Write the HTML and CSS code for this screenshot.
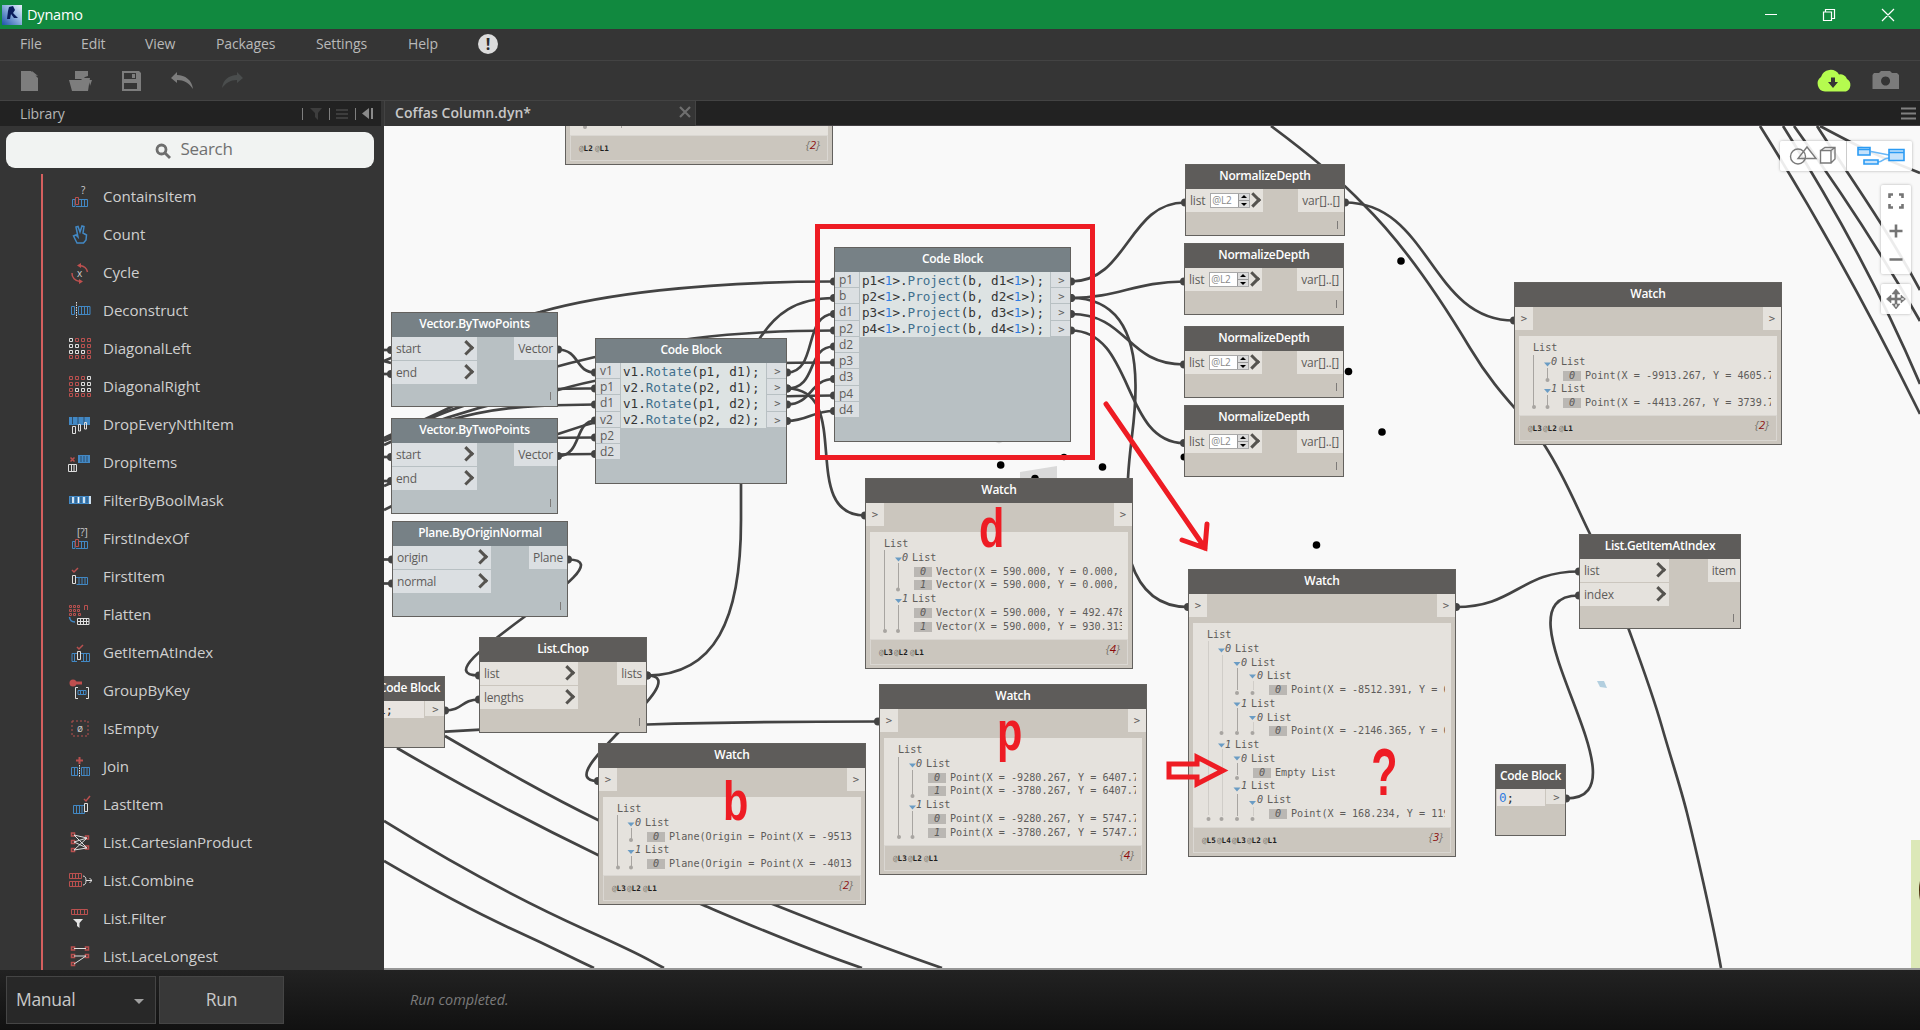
FILE: index.html
```html
<!DOCTYPE html>
<html lang="en">
<head>
  <meta charset="UTF-8">
  <title>Dynamo</title>
  <meta name="viewport" content="width=device-width, initial-scale=1.0" />
  <link rel="stylesheet" href="styles.css">
</head>
<body>
  <div class="app">
    <header class="titlebar">
      <svg class="logo" width="20" height="20" viewBox="0 0 20 20">
        <defs><linearGradient id="lg" x1="0" y1="1" x2="1" y2="0"><stop offset="0" stop-color="#1c52a8"/><stop offset=".55" stop-color="#8fb2e0"/><stop offset="1" stop-color="#e8f0fa"/></linearGradient></defs>
        <rect width="20" height="20" fill="url(#lg)"/>
        <path d="M7 2L11 1L13 5L11 8L16 13L12 13L9 9L8 14L5 14L6 6Z" fill="#0a1c5c"/>
      </svg>
      <span class="app-name">Dynamo</span>
      <svg class="window-buttons" width="130" height="14" viewBox="0 0 130 14" fill="none" stroke="#fff" stroke-width="1.2">
        <path d="M0 6.500H12M58.500 4V12.500H66.500V4ZM60.500 3.500V1.500H69.500V10.500H67M117 1L129 13M129 1L117 13"/>
      </svg>
    </header>

    <nav class="menu">
      <span class="m-file">File</span><span class="m-edit">Edit</span><span class="m-view">View</span><span class="m-packages">Packages</span><span class="m-settings">Settings</span><span class="m-help">Help</span>
      <b class="notice">!</b>
    </nav>

    <div class="toolbar">
      <svg class="tools" width="230" height="24" viewBox="20 69 230 24" fill="#7d7d7d">
        <path d="M21 71H31L38 78V91H21ZM32 71L38 76L33 75Z"/>
        <path d="M75 71H88V76L85 77L83 79H75ZM69 80H81L83 78H90L88 91H72ZM89 80H92L90 86Z"/>
        <path fill-rule="evenodd" d="M122 71H139L141 73V91H122ZM124 73V79H136V73ZM124 83V89H137V83ZM132 74H135V78H132Z"/>
        <path d="M171 78L177 72V75C185 75 192 80 193 89C189 83 184 80 177 80V83Z"/>
        <path class="off" d="M243 78L237 72V75C229 75 223 80 222 88C226 83 230 80 237 80V83Z"/>
      </svg>
      <svg class="cloud" width="90" height="26" viewBox="1814 69 90 26">
        <path d="M1824 92.500A8 8 0 0 1 1820 78A10 10 0 0 1 1838 75.500A7 7 0 0 1 1846 80A7 7 0 0 1 1845 92.500Z" fill="#b5fb4f"/>
        <path d="M1830 78.500H1834V83H1837L1832 89L1827 83H1830Z" fill="#353535"/>
        <path fill-rule="evenodd" d="M1873 74H1878L1880 72H1889L1891 74H1896L1898 76V90H1871.500V76ZM1884.500 77.500A4.500 4.500 0 1 0 1884.600 77.500Z" fill="#7b7b7b"/>
      </svg>
    </div>

    <div class="main">
      <aside class="library">
        <div class="library-head">
          <span>Library</span>
          <svg width="74" height="14" viewBox="301 106 74 14">
            <path d="M302.500 107V119M329.500 107V119M355.500 107V119" stroke="#7f7f7f"/>
            <path d="M310 107H322L318 112V119L315 116V112Z" fill="#3d3d3d"/>
            <path d="M336 109H348M336 113H348M336 117H348" stroke="#3d3d3d" stroke-width="2"/>
            <path d="M369 107V118L362 112.500ZM371 107H373V118H371Z" fill="#8a8a8a"/>
          </svg>
        </div>
        <div class="search">
          <svg width="16" height="16" viewBox="0 0 16 16" fill="none" stroke="#6e6e6e" stroke-width="2.800"><circle cx="6.500" cy="6.500" r="4.500"/><path d="M10 10L15 15"/></svg>
          <span>Search</span>
        </div>
        <ul class="items">
          <li><svg viewBox="0 0 24 24"><path class="b" d="M4.500 15.500H7V22.500H4.500ZM11 15.500H19.500V22.500H11M8 22.500H11M13.500 15.500V22.500M16.500 15.500V22.500"/><path class="r" d="M7.500 13.500H10.500V20.500H7.500Z"/><text x="13" y="10">?</text></svg>ContainsItem</li>
          <li><svg viewBox="0 0 24 24"><path class="b" stroke-width="1.500" d="M9 21L5.500 14L8 13L10 15L8 5L10 4.500L12 10L14 4L16 4.500L15 11L18.500 13L18 18L15.500 21Z"/></svg>Count</li>
          <li><svg viewBox="0 0 24 24"><path class="r" stroke-width="1.500" d="M12 5.500A9 8 0 0 1 19.500 12M12 21.500A9 8 0 0 1 4 13"/><path class="rf" d="M9 5.500L13 3V8ZM15 21.500L11 19V24Z"/><text x="9" y="17">x</text></svg>Cycle</li>
          <li><svg viewBox="0 0 24 24"><path class="b" d="M3.500 8.500H6.500V16.500H3.500ZM10.500 8.500H22V16.500H10.500ZM13.500 8.500V16.500M16.500 8.500V16.500M19.500 8.500V16.500"/><path class="w" stroke-dasharray="1.500 1" d="M8.500 4V20"/></svg>Deconstruct</li>
          <li><svg viewBox="0 0 24 24"><path class="r" d="M7.500 2.500h3v3h-3zM13.500 2.500h3v3h-3zM19.500 2.500h3v3h-3zM13.500 8.500h3v3h-3zM19.500 8.500h3v3h-3zM19.500 14.500h3v3h-3zM1.500 19.500h3v3h-3zM7.500 19.500h3v3h-3zM13.500 19.500h3v3h-3zM19.500 19.500h3v3h-3z"/><path class="w" d="M1.500 2.500h3v3h-3zM1.500 8.500h3v3h-3zM7.500 8.500h3v3h-3zM1.500 14.500h3v3h-3zM7.500 14.500h3v3h-3zM13.500 14.500h3v3h-3z"/></svg>DiagonalLeft</li>
          <li><svg viewBox="0 0 24 24"><path class="r" d="M1.500 2.500h3v3h-3zM7.500 2.500h3v3h-3zM13.500 2.500h3v3h-3zM1.500 8.500h3v3h-3zM7.500 8.500h3v3h-3zM1.500 14.500h3v3h-3zM1.500 19.500h3v3h-3zM7.500 19.500h3v3h-3zM13.500 19.500h3v3h-3zM19.500 19.500h3v3h-3z"/><path class="w" d="M19.500 2.500h3v3h-3zM13.500 8.500h3v3h-3zM19.500 8.500h3v3h-3zM7.500 14.500h3v3h-3zM13.500 14.500h3v3h-3zM19.500 14.500h3v3h-3z"/></svg>DiagonalRight</li>
          <li><svg viewBox="0 0 24 24"><path class="bf" d="M1 5H22V13H1Z"/><path d="M4.500 5V12M10 5V12M16 5V12" stroke="#2c4a68"/><path class="w" d="M4.500 14.500h3v7h-3zM10.500 12.500h2v6.500h-2zM16.500 10.500h2v6.500h-2z"/></svg>DropEveryNthItem</li>
          <li><svg viewBox="0 0 24 24"><path class="bf" d="M10 5H22V13H10Z"/><path d="M13 6V12M16 6V12M19 6V12" stroke="#2c4a68"/><path class="r" stroke-width="1.500" d="M2.500 7.500L6.500 11.500M6.500 7.500L2.500 11.500"/><path class="w" d="M.500 14.500H8.500V21.500H.500ZM3.500 15V21M6 15V21"/></svg>DropItems</li>
          <li><svg viewBox="0 0 24 24"><path class="bf" d="M1 8H23V16H1Z"/><path d="M5 9V15M10.500 9V15M16 9V15" stroke="#fff" stroke-width="1.500"/><path d="M3 9V15M8 9V15M13 9V15M19 9V15" stroke="#2c4a68"/><path d="M22 8V16" stroke="#fff" stroke-width="1.500"/></svg>FilterByBoolMask</li>
          <li><svg viewBox="0 0 24 24"><path class="b" d="M4.500 15.500H7V22.500H4.500ZM11 15.500H19.500V22.500H11M8 22.500H11M13.500 15.500V22.500M16.500 15.500V22.500"/><path class="r" d="M7.500 13.500H10.500V20.500H7.500Z"/><text x="9" y="10">[?]</text></svg>FirstIndexOf</li>
          <li><svg viewBox="0 0 24 24"><path class="b" d="M8 13.500H19.500V20.500H8.500M11 13.500V20.500M14 13.500V20.500M17 13.500V20.500"/><path class="w" d="M4.500 11.500H7.500V19.500H4.500Z"/><path class="r" stroke-width="1.500" d="M4 6L6 8L10 4"/></svg>FirstItem</li>
          <li><svg viewBox="0 0 24 24"><path class="r" d="M1.500 3.500h2v2h-2zM5.500 3.500h2v2h-2zM9.500 3.500h2v2h-2zM1.500 7.500h2v2h-2zM5.500 7.500h2v2h-2zM9.500 7.500h2v2h-2zM1.500 11.500h2v2h-2zM5.500 11.500h2v2h-2zM10.500 11.500h2v2h-2zM16.500 8V3.500H19.500V8"/><path class="b" stroke-width="1.500" d="M1.500 15Q2 20 7 20"/><path class="w" d="M9.500 16.500H21V22.500H9.500ZM12.500 17V22M15.500 17V22M18.500 17V22M9.500 19.500H21"/></svg>Flatten</li>
          <li><svg viewBox="0 0 24 24"><path class="b" d="M9 13.500H4V21.500H9M6.500 13.500V21.500M13 13.500H21.500V21.500H13M15.500 13.500V21.500M18.500 13.500V21.500"/><path class="w" d="M9.500 11.500H12.500V19.500H9.500Z"/><path class="r" stroke-width="1.500" d="M9 7L11 9L15 5"/></svg>GetItemAtIndex</li>
          <li><svg viewBox="0 0 24 24"><circle class="rf" cx="5" cy="5" r="3.500"/><path class="rf" d="M6 3.500H14V6.500H6Z"/><path class="w" d="M10 9.500H7.500V20.500H10M18 9.500H20.500V20.500H18"/><path class="b" d="M10 12.500H18V16.500H10ZM12.500 12.500V16.500M15.500 12.500V16.500"/></svg>GroupByKey</li>
          <li><svg viewBox="0 0 24 24"><path class="r" stroke-dasharray="2 2" d="M4 5H20V20H4Z"/><text x="9" y="16">ø</text></svg>IsEmpty</li>
          <li><svg viewBox="0 0 24 24"><path class="b" d="M3.500 13.500H9.500V21.500H3.500ZM6.500 13.500V21.500M13.500 13.500H21.500V21.500H13.500ZM16 13.500V21.500M19 13.500V21.500"/><path class="w" stroke-dasharray="1.500 1" d="M11.500 11V23"/><path class="r" stroke-width="2" d="M11.500 3V10M8 6.500H15"/></svg>Join</li>
          <li><svg viewBox="0 0 24 24"><path class="b" d="M5.500 13.500H16.500V21.500H5.500ZM8.500 13.500V21.500M11.500 13.500V21.500M14 13.500V21.500"/><path class="w" d="M16.500 11.500H19.500V19.500H16.500Z"/><path class="r" stroke-width="1.500" d="M16 7L18 9L22 4"/></svg>LastItem</li>
          <li><svg viewBox="0 0 24 24"><path class="r" stroke-width="1.500" d="M3.500 3h3v3h-3zM3.500 10.500h3v3h-3zM3.500 18.500h3v3h-3zM17.500 6h3v3h-3zM17.500 16h3v3h-3z"/><path class="w" d="M6 5L19 8M6 5L19 18M6 12L19 8M6 12L19 18M6 20L19 8M6 20L19 18"/></svg>List.CartesianProduct</li>
          <li><svg viewBox="0 0 24 24"><path class="r" d="M1.500 5.500H13.500V10.500H1.500ZM4.500 5.500V10.500M7.500 5.500V10.500M10.500 5.500V10.500M1.500 13.500H13.500V18.500H1.500ZM4.500 13.500V18.500M7.500 13.500V18.500M10.500 13.500V18.500"/><path class="w" d="M15 8Q18 8 18 12.500Q18 17 15 17M18 12.500H24M21.500 10L24 12.500L21.500 15"/></svg>List.Combine</li>
          <li><svg viewBox="0 0 24 24"><path class="r" d="M3.500 3.500H19.500V8.500H3.500ZM6.500 3.500V8.500M9.500 3.500V8.500M12.500 3.500V8.500M16.500 3.500V8.500"/><path fill="#e4e4e4" d="M5 13H15L11.500 17V22L9 20V17Z"/></svg>List.Filter</li>
          <li><svg viewBox="0 0 24 24"><path class="r" stroke-width="1.500" d="M3.500 3h3v3h-3zM17.500 3h3v3h-3zM3.500 10.500h3v3h-3zM17.500 10.500h3v3h-3zM3.500 18.500h3v3h-3z"/><path class="w" d="M6 4.500H18M6 12H18L6 20"/></svg>List.LaceLongest</li>
        </ul>
      </aside>

      <section class="workspace">
        <div class="tabs">
          <div class="tab"><span>Coffas Column.dyn*</span><svg width="12" height="12" viewBox="0 0 12 12" stroke="#6f6f6f" stroke-width="2.200"><path d="M1 1L11 11M11 1L1 11"/></svg></div>
          <svg class="burger" width="16" height="13" viewBox="0 0 16 13" stroke="#808080" stroke-width="2"><path d="M0 1.500H15M0 6.500H15M0 11.500H15"/></svg>
        </div>

        <div class="canvas">
          <div class="graph">
            <!-- geometry preview and connectors -->
            <svg class="wires" width="1920" height="1030" viewBox="0 0 1920 1030">
              <defs><marker id="dot" markerUnits="userSpaceOnUse" markerWidth="10" markerHeight="10" refX="5" refY="5"><circle cx="5" cy="5" r="4" fill="#434343"/></marker></defs>
              <path class="plane" d="M1020 472L1057 466V480H1020ZM993 441H1005L999 443.500Z"/>
              <g class="points">
                <circle cx="1401" cy="261" r="3.800"/><circle cx="1348.500" cy="371.500" r="3.800"/><circle cx="1382" cy="432" r="3.800"/><circle cx="1316.500" cy="545" r="3.800"/>
                <circle cx="1000.700" cy="465" r="3.800"/><circle cx="1064" cy="457" r="3.300"/><circle cx="1102.500" cy="467" r="3.800"/><circle cx="1035" cy="478.500" r="3.800"/><circle cx="1184" cy="457" r="3.500"/>
              </g>
              <path d="M1597 681L1604 681L1607 688L1600 687Z" fill="#b3cfdf"/>
              <path d="M1911 840H1920V968H1911Z" fill="#dce8b8"/>
              <path d="M1920 881Q1918 890 1920 900Z" fill="#4a2a08"/>

              <!-- long wires -->
              <path d="M1271 126C1310 155 1340 180 1363 204C1400 240 1440 298 1470 348S1525 415 1545 446S1577 508 1590 534S1618 600 1629 630S1652 692 1662 727S1680 785 1687 813S1712 918 1721 968"/>
              <path d="M1760 126Q1843 258 1920 414M1783 126C1830 200 1880 290 1920 384M1794 126C1830 176 1880 250 1920 321M1817 126C1845 170 1885 225 1920 290M1820 126C1850 142 1880 158 1920 173"/>
              <path d="M445 736C500 768 545 794 598 820C660 852 715 881 775 905S890 950 942 968"/>
              <path d="M397 748C465 788 530 822 598 855C640 876 670 891 703 905S800 947 862 968"/>
              <path d="M384 821C450 862 515 898 586 930S640 956 664 968"/>
              <path d="M384 861C425 885 470 910 514 930S570 957 594 968"/>
              <path marker-end="url(#dot)" d="M384 735C450 731 560 725 647 724.500C730 722 800 721.500 878 721.500"/>

              <!-- into the code blocks -->
              <path marker-end="url(#dot)" d="M384 361C420 345 470 330 540 312C600 295 700 281.500 834 281.500"/>
              <path marker-end="url(#dot)" d="M384 438C420 421 435 415 451 407C480 390 530 372 595 357C650 343 720 330.500 834 330.500"/>
              <path marker-end="url(#dot)" d="M384 441C440 418 500 400 558 390C620 372 700 362.500 834 362.500"/>
              <path marker-end="url(#dot)" d="M384 486C430 465 500 450 558 434C620 412 700 395.500 834 395.500"/>
              <path marker-end="url(#dot)" d="M384 440C440 412 470 402 510 393C545 388 570 388.500 595 388.500"/>
              <path marker-end="url(#dot)" d="M384 445C430 423 480 408 540 406C560 405 575 404.500 595 404.500"/>
              <path marker-end="url(#dot)" d="M540 438C560 437.500 575 437.500 595 437.500"/>
              <path marker-end="url(#dot)" d="M550 455C565 454 580 454 595 454"/>
              <path d="M384 510L392 506M384 361L391 363"/>
              <path marker-end="url(#dot)" d="M384 350H391"/>
              <path marker-end="url(#dot)" d="M384 374H391"/>
              <path marker-end="url(#dot)" d="M384 457H391"/>
              <path marker-end="url(#dot)" d="M384 481H391"/>
              <path marker-end="url(#dot)" d="M384 559.500H392"/>
              <path marker-end="url(#dot)" d="M384 583.500H392"/>
              <g class="links">
                <path d="M558 349.500C580 350 575 372.500 595 372.500"/>
                <path d="M558 456C582 456 574 421 595 420.500"/>
                <path d="M787 372.500C818 372.500 803 314 834 314"/>
                <path d="M787 388.500C818 388.500 806 346.500 834 346.500"/>
                <path d="M787 388.500C855 388.500 797 515.500 865 515.500"/>
                <path d="M787 404.500C812 404.500 810 379 834 379"/>
                <path d="M787 421C808 421 812 411 834 411"/>
                <path d="M1071 281.500C1128 281.500 1128 202.500 1185 202.500"/>
                <path d="M1071 298C1118 298 1136 281.500 1184 281.500"/>
                <path d="M1071 314C1128 314 1126 364.500 1184 364.500"/>
                <path d="M1071 330.500C1134 330.500 1122 443 1184 443"/>
                <path d="M1071 298C1112 298 1135 325 1135.500 385C1136 420 1130 440 1128 478C1118 530 1126 607 1188 607"/>
                <path d="M1345 202.500C1430 202.500 1430 320.500 1514 320.500"/>
                <path d="M1456 607C1515 607 1520 571.500 1579 571.500"/>
                <path d="M1566 798.500C1655 798.500 1487 595.500 1579 595.500"/>
                <path d="M568 559.500C636 559.500 411 675.500 479 675.500"/>
                <path d="M647 675.500C701 675.500 544 781 598 781"/>
                <path d="M445 710.500C463 710.500 461 699.500 479 699.500"/>
                <path d="M647 675.500C715 675 741 620 741 520V484C741 420 735 370 760 338C775 315 795 298 834 298"/>
              </g>
            </svg>

            <div class="node blue n-vector1">
              <div class="head">Vector.ByTwoPoints</div>
              <div class="ports"><div class="ins"><span>start</span><span>end</span></div><div class="outs"><span>Vector</span></div></div>
              <i class="lacing"></i>
            </div>
            <div class="node blue n-vector2">
              <div class="head">Vector.ByTwoPoints</div>
              <div class="ports"><div class="ins"><span>start</span><span>end</span></div><div class="outs"><span>Vector</span></div></div>
              <i class="lacing"></i>
            </div>
            <div class="node blue n-plane">
              <div class="head">Plane.ByOriginNormal</div>
              <div class="ports"><div class="ins"><span>origin</span><span>normal</span></div><div class="outs"><span>Plane</span></div></div>
              <i class="lacing"></i>
            </div>
            <div class="node n-chop">
              <div class="head">List.Chop</div>
              <div class="ports"><div class="ins"><span>list</span><span>lengths</span></div><div class="outs"><span>lists</span></div></div>
              <i class="lacing"></i>
            </div>
            <div class="node n-getitem">
              <div class="head">List.GetItemAtIndex</div>
              <div class="ports"><div class="ins"><span>list</span><span>index</span></div><div class="outs"><span>item</span></div></div>
              <i class="lacing"></i>
            </div>

            <div class="node depth n-depth1">
              <div class="head">NormalizeDepth</div>
              <div class="ports"><div class="ins"><span>list<em class="spin">@L2<b></b></em></span></div><div class="outs"><span>var[]..[]</span></div></div>
              <i class="lacing"></i>
            </div>
            <div class="node depth n-depth2">
              <div class="head">NormalizeDepth</div>
              <div class="ports"><div class="ins"><span>list<em class="spin">@L2<b></b></em></span></div><div class="outs"><span>var[]..[]</span></div></div>
              <i class="lacing"></i>
            </div>
            <div class="node depth n-depth3">
              <div class="head">NormalizeDepth</div>
              <div class="ports"><div class="ins"><span>list<em class="spin">@L2<b></b></em></span></div><div class="outs"><span>var[]..[]</span></div></div>
              <i class="lacing"></i>
            </div>
            <div class="node depth n-depth4">
              <div class="head">NormalizeDepth</div>
              <div class="ports"><div class="ins"><span>list<em class="spin">@L2<b></b></em></span></div><div class="outs"><span>var[]..[]</span></div></div>
              <i class="lacing"></i>
            </div>

            <div class="node blue n-rotate">
              <div class="head">Code Block</div>
              <div class="code-body">
                <div class="code-in"><span>v1</span><span>p1</span><span>d1</span><span>v2</span><span>p2</span><span>d2</span></div>
                <pre class="code">v1.<i>Rotate</i>(p1, d1);
v2.<i>Rotate</i>(p2, d1);
v1.<i>Rotate</i>(p1, d2);
v2.<i>Rotate</i>(p2, d2);</pre>
                <div class="code-out"><span>&gt;</span><span>&gt;</span><span>&gt;</span><span>&gt;</span></div>
              </div>
            </div>
            <div class="node blue n-project">
              <div class="head">Code Block</div>
              <div class="code-body">
                <div class="code-in"><span>p1</span><span>b</span><span>d1</span><span>p2</span><span>d2</span><span>p3</span><span>d3</span><span>p4</span><span>d4</span></div>
                <pre class="code">p1&lt;<b>1</b>&gt;.<i>Project</i>(b, d1&lt;<b>1</b>&gt;);
p2&lt;<b>1</b>&gt;.<i>Project</i>(b, d2&lt;<b>1</b>&gt;);
p3&lt;<b>1</b>&gt;.<i>Project</i>(b, d3&lt;<b>1</b>&gt;);
p4&lt;<b>1</b>&gt;.<i>Project</i>(b, d4&lt;<b>1</b>&gt;);</pre>
                <div class="code-out"><span>&gt;</span><span>&gt;</span><span>&gt;</span><span>&gt;</span></div>
              </div>
            </div>
            <div class="node n-one">
              <div class="head">Code Block</div>
              <div class="code-body"><pre class="code">1;</pre><div class="code-out"><span>&gt;</span></div></div>
            </div>
            <div class="node n-zero">
              <div class="head">Code Block</div>
              <div class="code-body"><pre class="code"><b>0</b>;</pre><div class="code-out"><span>&gt;</span></div></div>
            </div>

            <div class="node watch n-watch-top">
              <div class="tree"></div>
              <div class="foot"><span>@<b>L2</b></span><span>@<b>L1</b></span><em>{<b>2</b>}</em></div>
            </div>
            <div class="node watch n-watch-right">
              <div class="head">Watch</div>
              <div class="io"><span>&gt;</span><span>&gt;</span></div>
              <div class="tree">
                <div class="row">List</div>
                <div class="row d1"><i>0</i>List</div>
                <div class="row d2 leaf"><i>0</i>Point(X = -9913.267, Y = 4605.764</div>
                <div class="row d1"><i>1</i>List</div>
                <div class="row d2 leaf"><i>0</i>Point(X = -4413.267, Y = 3739.739</div>
              </div>
              <div class="foot"><span>@<b>L3</b></span><span>@<b>L2</b></span><span>@<b>L1</b></span><em>{<b>2</b>}</em></div>
            </div>
            <div class="node watch n-watch-d">
              <div class="head">Watch</div>
              <div class="io"><span>&gt;</span><span>&gt;</span></div>
              <div class="tree">
                <div class="row">List</div>
                <div class="row d1"><i>0</i>List</div>
                <div class="row d2 leaf"><i>0</i>Vector(X = 590.000, Y = 0.000,</div>
                <div class="row d2 leaf"><i>1</i>Vector(X = 590.000, Y = 0.000,</div>
                <div class="row d1"><i>1</i>List</div>
                <div class="row d2 leaf"><i>0</i>Vector(X = 590.000, Y = 492.478</div>
                <div class="row d2 leaf"><i>1</i>Vector(X = 590.000, Y = 930.313</div>
              </div>
              <div class="foot"><span>@<b>L3</b></span><span>@<b>L2</b></span><span>@<b>L1</b></span><em>{<b>4</b>}</em></div>
            </div>
            <div class="node watch n-watch-p">
              <div class="head">Watch</div>
              <div class="io"><span>&gt;</span><span>&gt;</span></div>
              <div class="tree">
                <div class="row">List</div>
                <div class="row d1"><i>0</i>List</div>
                <div class="row d2 leaf"><i>0</i>Point(X = -9280.267, Y = 6407.764</div>
                <div class="row d2 leaf"><i>1</i>Point(X = -3780.267, Y = 6407.764</div>
                <div class="row d1"><i>1</i>List</div>
                <div class="row d2 leaf"><i>0</i>Point(X = -9280.267, Y = 5747.764</div>
                <div class="row d2 leaf"><i>1</i>Point(X = -3780.267, Y = 5747.764</div>
              </div>
              <div class="foot"><span>@<b>L3</b></span><span>@<b>L2</b></span><span>@<b>L1</b></span><em>{<b>4</b>}</em></div>
            </div>
            <div class="node watch n-watch-b">
              <div class="head">Watch</div>
              <div class="io"><span>&gt;</span><span>&gt;</span></div>
              <div class="tree">
                <div class="row">List</div>
                <div class="row d1"><i>0</i>List</div>
                <div class="row d2 leaf"><i>0</i>Plane(Origin = Point(X = -9513</div>
                <div class="row d1"><i>1</i>List</div>
                <div class="row d2 leaf"><i>0</i>Plane(Origin = Point(X = -4013</div>
              </div>
              <div class="foot"><span>@<b>L3</b></span><span>@<b>L2</b></span><span>@<b>L1</b></span><em>{<b>2</b>}</em></div>
            </div>
            <div class="node watch n-watch-result">
              <div class="head">Watch</div>
              <div class="io"><span>&gt;</span><span>&gt;</span></div>
              <div class="tree">
                <div class="row">List</div>
                <div class="row d1"><i>0</i>List</div>
                <div class="row d2"><i>0</i>List</div>
                <div class="row d3"><i>0</i>List</div>
                <div class="row d4 leaf"><i>0</i>Point(X = -8512.391, Y = 6</div>
                <div class="row d2"><i>1</i>List</div>
                <div class="row d3"><i>0</i>List</div>
                <div class="row d4 leaf"><i>0</i>Point(X = -2146.365, Y = 6</div>
                <div class="row d1"><i>1</i>List</div>
                <div class="row d2"><i>0</i>List</div>
                <div class="row d3 leaf"><i>0</i>Empty List</div>
                <div class="row d2 after-empty"><i>1</i>List</div>
                <div class="row d3"><i>0</i>List</div>
                <div class="row d4 leaf"><i>0</i>Point(X = 168.234, Y = 119</div>
              </div>
              <div class="foot"><span>@<b>L5</b></span><span>@<b>L4</b></span><span>@<b>L3</b></span><span>@<b>L2</b></span><span>@<b>L1</b></span><em>{<b>3</b>}</em></div>
            </div>

            <!-- tree guides, expanders and the red markup -->
            <svg class="overlay" width="1920" height="1030" viewBox="0 0 1920 1030">
              <defs>
                <path id="tri" d="M-3.500 -1.500H3.500L0 2.500Z" fill="#6a9cc4"/>
                <circle id="end" r="2" fill="#a8a5a1"/>
              </defs>
              <g class="guides">
                <path d="M621.500 126V128"/>
                <use href="#end" x="585" y="127"/>
                <path d="M1533.500 355V407M1547.500 368V380M1547.500 395V407"/>
                <use href="#end" x="1534" y="407"/><use href="#end" x="1547.500" y="380"/><use href="#end" x="1547.500" y="407"/>
                <use href="#tri" x="1547.500" y="364"/><use href="#tri" x="1547.500" y="390.500"/>
                <path d="M884.500 550V631M898.500 563V589M898.500 605V631"/>
                <use href="#end" x="885" y="631"/><use href="#end" x="898" y="589.500"/><use href="#end" x="898" y="631"/>
                <use href="#tri" x="898.500" y="559"/><use href="#tri" x="898.500" y="600.500"/>
                <path d="M898.500 757V837M912.500 770V796M912.500 811V837"/>
                <use href="#end" x="899" y="837"/><use href="#end" x="912.500" y="796"/><use href="#end" x="912.500" y="837"/>
                <use href="#tri" x="912.500" y="765"/><use href="#tri" x="912.500" y="807"/>
                <path d="M617.500 815V867M631.500 828V840M631.500 856V867"/>
                <use href="#end" x="618" y="867.500"/><use href="#end" x="631" y="840"/><use href="#end" x="631" y="867.500"/>
                <use href="#tri" x="631" y="824"/><use href="#tri" x="631" y="851.500"/>
                <path class="soft" d="M1208.500 641V815M1222.500 655V731M1222.500 749V816M1253.500 681V690M1253.500 722V731M1253.500 807V816"/>
                <path d="M1237.500 668V690M1237.500 708V731M1237.500 763V775M1237.500 794V816"/>
                <use href="#end" x="1208.500" y="819"/><use href="#end" x="1221.500" y="819"/><use href="#end" x="1237" y="819"/><use href="#end" x="1252.500" y="819"/>
                <use href="#end" x="1221.500" y="733"/><use href="#end" x="1237" y="733"/><use href="#end" x="1252.500" y="733"/>
                <use href="#end" x="1237" y="693"/><use href="#end" x="1252.500" y="693"/><use href="#end" x="1237" y="778"/>
                <use href="#tri" x="1221.500" y="650"/><use href="#tri" x="1237" y="663.500"/><use href="#tri" x="1252.500" y="676"/>
                <use href="#tri" x="1237" y="704"/><use href="#tri" x="1252.500" y="717.500"/><use href="#tri" x="1221.500" y="745"/>
                <use href="#tri" x="1237" y="758"/><use href="#tri" x="1237" y="789"/><use href="#tri" x="1252.500" y="802.500"/>
              </g>
              <g class="markup">
                <path d="M817.500 226.500H1092.500V457.500H817.500Z"/>
                <path d="M1106 404L1205 548M1207 524L1205 548L1182 540" stroke-linecap="round"/>
                <path d="M1169 764H1197V757L1223 770.500L1197 784V777H1169Z"/>
              </g>
            </svg>
            <span class="note note-b">b</span>
            <span class="note note-d">d</span>
            <span class="note note-p">p</span>
            <span class="note note-q">?</span>
          </div>

          <div class="view-switch">
            <svg width="48" height="22" viewBox="1788 144 48 22" fill="none" stroke="#7a7a7a" stroke-width="1.400"><circle cx="1797" cy="156.500" r="7.500"/><path d="M1806 147L1815 158.500H1797ZM1819.500 150.500H1830V163H1819.500ZM1819.500 150.500L1824 147.500H1834V159L1830 163M1830 150.500L1834 147.500"/></svg>
            <svg width="48" height="22" viewBox="1856 144 48 22" fill="#c5e2fb" stroke="#2b9bf4" stroke-width="1.600"><path fill="none" stroke="#6ab8f7" d="M1870 151.500L1888 155M1877 162C1882 162 1882 158 1888 158"/><path d="M1857 147.500H1869V155H1857ZM1857 149.500H1869M1888 149.500H1903V160.500H1888ZM1888 152.500H1903M1863 160H1877V164H1863Z"/></svg>
          </div>
          <div class="zoom-box">
            <svg width="30" height="89" viewBox="0 0 30 89" fill="none" stroke="#757575" stroke-width="2.600">
              <path d="M8.500 13V9.500H12M18 9.500H21.500V13M21.500 19V22.500H18M12 22.500H8.500V19M15 39.500V52.500M8.500 46H21.500M8.500 74.500H21.500"/>
            </svg>
          </div>
          <div class="pan-box">
            <svg width="30" height="30" viewBox="0 0 30 30" fill="#757575"><path d="M14 7H16V23H14ZM7 14H23V16H7ZM15 5L19 10H11ZM15 25L19 20H11ZM5.500 15L10 11V19ZM24.500 15L20 11V19Z" stroke="#757575" stroke-width=".6"/></svg>
          </div>
        </div>
      </section>
    </div>

    <footer class="runbar">
      <div class="mode">Manual</div>
      <div class="run">Run</div>
      <span class="status">Run completed.</span>
    </footer>
  </div>
</body>
</html>
```
FILE: styles.css
```css
* {
  box-sizing: border-box;
}
body {
  margin: 0;
  font-family: "Open Sans", "Noto Sans", sans-serif;
  background: #353535;
  color: #c8c8c8;
}
.app {
  width: 1920px;
  height: 1030px;
  display: flex;
  flex-direction: column;
  overflow: hidden;
}

/* window chrome */
.titlebar {
  height: 29px;
  background: #11893f;
  display: flex;
  align-items: center;
  padding: 0 25px 0 2px;
  color: #fff;
  flex: none;
}
.app-name {
  font-size: 14.5px;
  margin-left: 5px;
  letter-spacing: -0.2px;
  flex: 1;
}
.menu {
  height: 32px;
  display: flex;
  align-items: center;
  padding: 0 0 2px 20px;
  font-size: 14px;
  letter-spacing: -0.1px;
  color: #b9b9b9;
  border-bottom: 1px solid #434343;
  flex: none;
}
.m-file { width: 61px; }
.m-edit { width: 64px; }
.m-view { width: 71px; }
.m-packages { width: 100px; }
.m-settings { width: 92px; }
.m-help { width: 70px; }
.notice {
  width: 20px;
  height: 20px;
  border-radius: 50%;
  background: #dcdcdc;
  color: #2b2b2b;
  text-align: center;
  line-height: 20px;
  font-size: 16px;
}
.toolbar {
  height: 40px;
  display: flex;
  align-items: center;
  justify-content: space-between;
  padding: 0 15px 0 20px;
  border-bottom: 1px solid #434343;
  flex: none;
}
.off {
  fill: #4a4d4d;
}
.main {
  height: 869px;
  display: flex;
  flex: none;
}

/* library */
.library {
  width: 384px;
  background: #353535;
  overflow: hidden;
  flex: none;
}
.library-head {
  width: 381px;
  height: 25px;
  background: #222;
  display: flex;
  align-items: center;
  justify-content: space-between;
  padding: 0 6px 0 20px;
  font-size: 14px;
  letter-spacing: -0.15px;
  color: #b5b5b5;
}
.search {
  width: 368px;
  height: 36px;
  margin: 6px 0 0 6px;
  border-radius: 9px;
  background: #f1f3f2;
  color: #707070;
  display: flex;
  align-items: center;
  justify-content: center;
  gap: 9px;
  padding: 0 0 3px 8px;
  font-size: 17px;
  letter-spacing: -0.3px;
}
.search svg {
  margin-top: 5px;
}
.items {
  list-style: none;
  margin: 6px 0 0 41px;
  padding: 3px 0 0 25px;
  height: 800px;
  border-left: 2px solid #d5605f;
}
.items li {
  height: 38px;
  display: flex;
  align-items: center;
  gap: 11px;
  font-size: 15.1px;
  letter-spacing: -0.05px;
  color: #cfcfcf;
}
.items svg {
  width: 24px;
  height: 24px;
  fill: none;
}
.items text {
  font: 10px "Open Sans", sans-serif;
  letter-spacing: 0;
  fill: #cfcfcf;
}
.b { stroke: #4288c4; }
.r { stroke: #b9504f; }
.w { stroke: #dedede; }
.bf { fill: #4288c4; }
.rf { fill: #c04f4e; }

/* workspace */
.workspace {
  flex: 1;
  min-width: 0;
}
.tabs {
  height: 25px;
  background: #222;
  display: flex;
  justify-content: space-between;
  align-items: center;
  padding-right: 3px;
  border-bottom: 1px solid #434043;
}
.tab {
  width: 312px;
  height: 25px;
  background: #353535;
  border-left: 1px solid #434343;
  border-right: 1px solid #434343;
  display: flex;
  align-items: center;
  justify-content: space-between;
  padding: 0 4px 2px 10px;
  font-size: 14px;
  font-weight: 600;
  letter-spacing: 0.05px;
}
.canvas {
  position: relative;
  height: 844px;
  overflow: hidden;
  background: #f9f9f9;
  border-bottom: 2px solid #979797;
}
.graph {
  position: absolute;
  left: -384px;
  top: -126px;
  width: 1920px;
  height: 1030px;
}
.wires,
.overlay {
  position: absolute;
  left: 0;
  top: 0;
}
.wires {
  fill: none;
  stroke: #434343;
  stroke-width: 2.7;
}
.wires marker,
.wires .points,
.wires .plane,
.wires [fill] {
  stroke: none;
}
.links path {
  marker-start: url(#dot);
  marker-end: url(#dot);
}
.points { fill: #000; }
.plane { fill: #d9d9d9; }
.guides {
  fill: none;
  stroke: #a8a5a1;
}
.guides use { stroke: none; }
.soft { stroke: #d0cdc8; }
.markup {
  fill: none;
  stroke: #ee1c24;
  stroke-width: 5;
}

/* nodes */
.node {
  position: absolute;
  border: 1px solid #63615e;
  background: #cbc6be;
  color: #5e5c5a;
  font-size: 12px;
}
.head {
  height: 24px;
  line-height: 21.5px;
  background: #5e5c5a;
  color: #fff;
  font-weight: 600;
  letter-spacing: -0.27px;
  text-align: center;
  white-space: nowrap;
}
.ports {
  display: flex;
  justify-content: space-between;
}
.ins {
  width: 85px;
}
.ins span,
.outs span {
  display: flex;
  align-items: center;
  height: 23px;
  margin-bottom: 1px;
  padding: 0 4px;
  background: #e5e2dd;
  letter-spacing: -0.2px;
}
.ins span::after {
  content: "";
  width: 8px;
  height: 8px;
  margin-left: auto;
  margin-right: -1px;
  border-top: 3px solid #55534f;
  border-right: 3px solid #55534f;
  transform: rotate(45deg) translate(-2px, 1px);
}
.lacing {
  position: absolute;
  right: 6px;
  bottom: 6px;
  width: 1px;
  height: 8px;
  background: #7d7a78;
}
.blue { background: #b8c0c3; }
.blue .head { background: #778186; }
.blue .ins span,
.blue .outs span,
.blue .code-in span,
.blue .code-out span { background: #dbdfe2; }

.n-vector1 { left: 391px; top: 312px; width: 167px; height: 95px; }
.n-vector2 { left: 391px; top: 418px; width: 167px; height: 96px; }
.n-plane { left: 392px; top: 521px; width: 176px; height: 96px; }
.n-chop { left: 479px; top: 637px; width: 168px; height: 96px; }
.n-getitem { left: 1579px; top: 534px; width: 162px; height: 95px; }
.n-plane .ins, .n-chop .ins { width: 98px; }
.n-getitem .ins { width: 89px; }
.n-depth1 { left: 1185px; top: 164px; width: 160px; height: 72px; }
.n-depth2 { left: 1184px; top: 243px; width: 160px; height: 72px; }
.n-depth3 { left: 1184px; top: 326px; width: 160px; height: 72px; }
.n-depth4 { left: 1184px; top: 405px; width: 160px; height: 72px; }
.n-rotate { left: 595px; top: 338px; width: 192px; height: 146px; }
.n-project { left: 834px; top: 247px; width: 237px; height: 195px; }
.n-one { left: 374px; top: 676px; width: 71px; height: 72px; }
.n-zero { left: 1495px; top: 764px; width: 71px; height: 72px; }
.n-watch-top { left: 565px; top: 100px; width: 268px; height: 65px; }
.n-watch-right { left: 1514px; top: 282px; width: 268px; height: 163px; }
.n-watch-d { left: 865px; top: 478px; width: 268px; height: 191px; }
.n-watch-p { left: 879px; top: 684px; width: 268px; height: 191px; }
.n-watch-b { left: 598px; top: 743px; width: 268px; height: 162px; }
.n-watch-result { left: 1188px; top: 569px; width: 268px; height: 288px; }

.depth .ins { width: 77px; }
.depth .ins span::after { margin-right: -2px; }
.spin {
  position: relative;
  width: 42px;
  height: 15px;
  margin-left: 5px;
  padding-left: 1px;
  border: 1px solid #a9a9a9;
  background: #fff;
  color: #8a8a8a;
  font-style: normal;
  font-size: 10px;
  line-height: 13px;
}
.spin b {
  position: absolute;
  right: 0;
  top: 0;
  width: 11px;
  height: 13px;
  background: linear-gradient(#dcdcdc 6px, #999 6px, #999 7px, #dcdcdc 7px);
  border-left: 1px solid #999;
}
.spin b::before,
.spin b::after {
  content: "";
  position: absolute;
  left: 2px;
  border: 3px solid transparent;
}
.spin b::before { top: 1px; border-top: 0; border-bottom-color: #000; }
.spin b::after { bottom: 1px; border-bottom: 0; border-top-color: #000; }

/* code blocks */
.code-body {
  display: flex;
  align-items: flex-start;
}
.code-in { width: 24px; }
.code-out { width: 19px; }
.code-in span,
.code-out span {
  display: block;
  height: 15.22px;
  margin-bottom: 1px;
  line-height: 15px;
  background: #e5e2dd;
}
.code-in span { padding-left: 4px; }
.code-out span {
  padding-left: 2px;
  font: 10.5px/16px "DejaVu Sans Mono", monospace;
  text-align: center;
}
.code {
  flex: 1;
  margin: 0 1px;
  padding: 1px 0 0 2px;
  height: fit-content;
  font: 12.62px/16.1px "DejaVu Sans Mono", monospace;
  color: #333;
  background: #e8e4e0;
}
.blue .code { background: #dde3e3; }
.code i { font-style: normal; color: #41708e; }
.code b { font-weight: normal; color: #2f7de1; }

/* watch nodes */
.watch {
  display: flex;
  flex-direction: column;
}
.io {
  display: flex;
  justify-content: space-between;
  flex: none;
}
.io span {
  width: 18px;
  height: 23px;
  background: #e5e2dd;
  text-align: center;
  font: 10.5px/23px "DejaVu Sans Mono", monospace;
}
.tree {
  flex: 1;
  margin: 6px 4px 0;
  padding: 5px 6px 0 14px;
  background: #e5e2dd;
  overflow: hidden;
  font: 10.13px/13.75px "DejaVu Sans Mono", monospace;
}
.row {
  display: flex;
  white-space: pre;
  overflow: hidden;
}
.row i {
  width: 10px;
  flex: none;
}
.leaf i {
  width: 18px;
  height: 10px;
  line-height: 10px;
  margin: 2px 4px 0 0;
  background: #bab7b3;
  text-align: center;
}
.d1 { padding-left: 18px; }
.d2.leaf { padding-left: 30px; }
.d2 { padding-left: 34px; }
.d3 { padding-left: 50px; }
.d3.leaf { padding-left: 46px; }
.d4 { padding-left: 62px; }
.foot {
  flex: none;
  height: 26px;
  margin: 0 4px 3px;
  padding-left: 8px;
  border: 1px solid #dad7d2;
  display: flex;
  align-items: center;
  font: 7.6px "DejaVu Sans Mono", monospace;
  color: #77746f;
}
.foot span b { color: #1d1d1d; }
.foot span { width: 15px; }
.foot span:nth-last-child(2) { margin-left: 1px; }
.foot em {
  margin: -8px 7px 0 auto;
  font: italic 11.5px "Open Sans", sans-serif;
}
.foot em b { color: #8c0a0a; font-weight: normal; }

/* red letters written over the graph */
.note {
  position: absolute;
  width: 30px;
  text-align: center;
  color: #ee1c24;
  font: bold 56px/60px "Liberation Sans", sans-serif;
  transform: scaleX(0.74);
}
.note-b { left: 719px; top: 771px; }
.note-d { left: 975px; top: 498px; }
.note-p { left: 993px; top: 701px; }
.note-q { left: 1366px; top: 742px; font-size: 66px; transform: scaleX(0.65); }

/* canvas controls */
.view-switch,
.zoom-box,
.pan-box {
  position: absolute;
  right: 9px;
  background: rgba(255, 255, 255, 0.9);
  border-radius: 2px;
  box-shadow: 0 0 3px rgba(0, 0, 0, 0.3);
}
.view-switch {
  top: 15px;
  right: 8px;
  width: 132px;
  height: 30px;
  display: grid;
  grid-template-columns: 66px 66px;
  place-items: center;
  padding-bottom: 2px;
  background-image: linear-gradient(#ccc, #ccc);
  background-size: 1px 100%;
  background-position: 66px 0;
  background-repeat: no-repeat;
}
.view-switch svg:last-child { margin-left: 4px; }
.zoom-box { top: 59px; width: 30px; height: 89px; }
.pan-box { top: 158px; width: 30px; height: 30px; }
.zoom-box svg, .pan-box svg { display: block; }

/* run bar */
.runbar {
  height: 60px;
  background: linear-gradient(#222, #111);
  display: flex;
  align-items: center;
  padding: 0 0 1px 6px;
  font-size: 17.5px;
  letter-spacing: -0.3px;
}
.mode,
.run {
  height: 48px;
  line-height: 44px;
  background: #282828;
  border: 1px solid #454545;
}
.mode {
  position: relative;
  width: 150px;
  padding-left: 9px;
}
.mode::after {
  content: "";
  position: absolute;
  right: 11px;
  top: 22px;
  border: 5px solid transparent;
  border-top-color: #a0a0a0;
  border-bottom: 0;
}
.run {
  width: 125px;
  margin-left: 3px;
  text-align: center;
  background: #383838;
}
.status {
  margin-left: 126px;
  font-size: 14.4px;
  letter-spacing: 0;
  font-style: italic;
  color: #7b7b7b;
}
```
